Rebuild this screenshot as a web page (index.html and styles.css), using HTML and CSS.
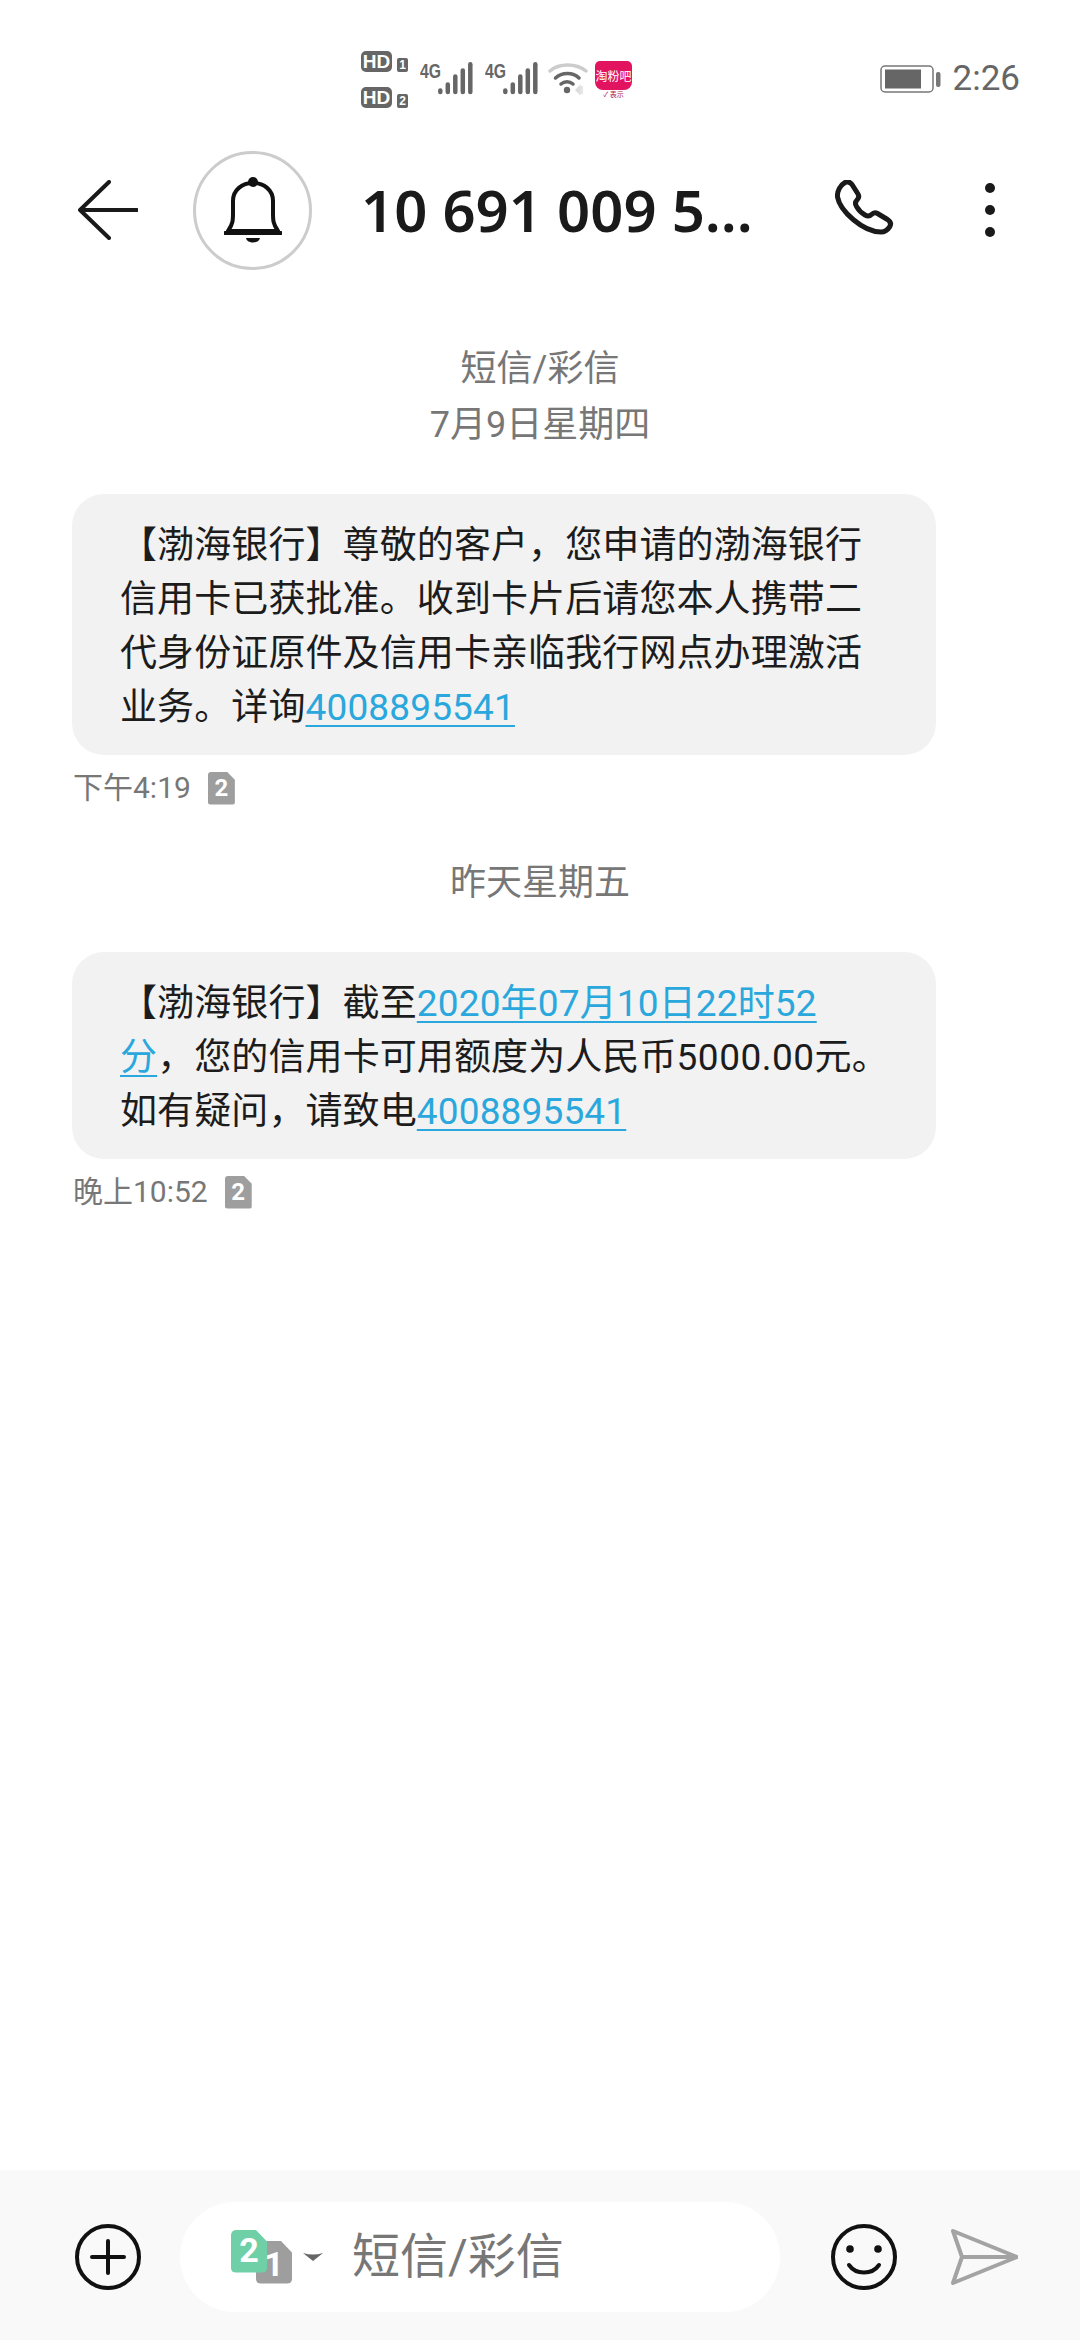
FILE: index.html
```html
<!DOCTYPE html>
<html lang="zh-CN">
<head>
<meta charset="utf-8">
<title>短信</title>
<link rel="stylesheet" href="styles.css">
</head>
<body>
<div class="phone">
  <div class="status">
    <div class="hd-col">
      <div class="hd-row"><span class="hd">HD</span><span class="sim-mini">1</span></div>
      <div class="hd-row"><span class="hd">HD</span><span class="sim-mini">2</span></div>
    </div>
    <div class="net"><span class="net-label">4G</span>
      <svg class="bars" viewBox="0 0 35 33"><g stroke="#666" stroke-width="4.500" stroke-linecap="round"><path d="M2.300 28.500v1.500"/><path d="M9.800 22.500v7.500"/><path d="M17.300 14.500v15.500"/><path d="M24.800 8.500v21.500"/><path d="M32.300 2.300v27.700"/></g></svg>
    </div>
    <div class="net"><span class="net-label">4G</span>
      <svg class="bars" viewBox="0 0 35 33"><g stroke="#666" stroke-width="4.500" stroke-linecap="round"><path d="M2.300 28.500v1.500"/><path d="M9.800 22.500v7.500"/><path d="M17.300 14.500v15.500"/><path d="M24.800 8.500v21.500"/><path d="M32.300 2.300v27.700"/></g></svg>
    </div>
    <svg class="wifi" viewBox="0 0 40 32"><g fill="none" stroke-width="3.500" stroke-linecap="round"><path d="M2 8C11 0 28 0 38 8" stroke="#ccc"/><path d="M7.500 15C14 9 25 9 31 15" stroke="#666"/><path d="M13 21C16.500 18 21.500 18 25 21" stroke="#666"/></g><circle cx="19" cy="27" r="3.200" fill="#666"/><path d="M28 27l4-4v8zM34 23v8" stroke="#ddd" stroke-width="1.500" fill="#ddd"/></svg>
    <div class="app">
      <div class="app-tile">淘粉吧</div>
      <div class="app-sub">✓ 表示</div>
    </div>
    <div class="status-right">
      <svg class="battery" viewBox="0 0 62 30"><rect x="1" y="2" width="52" height="26" rx="4" fill="none" stroke="#777" stroke-width="1.500"/><rect x="5" y="5.500" width="36" height="19" fill="#666"/><rect x="56" y="8" width="4.500" height="15" rx="2" fill="#777"/></svg>
      <span class="clock">2:26</span>
    </div>
  </div>

  <header class="head">
    <svg class="back" viewBox="0 0 60 60"><path d="M31 2L2 30l29 28M2 30h57" fill="none" stroke="#1a1a1a" stroke-width="4" stroke-linecap="round" stroke-linejoin="round"/></svg>
    <div class="avatar">
      <svg class="bell" viewBox="0 0 58 66"><path d="M4 54C9 47 9 43 9 36V24C9 13 18 6 29 6s20 7 20 18v12c0 7 0 11 5 18z" fill="none" stroke="#111" stroke-width="4" stroke-linejoin="round"/><path d="M1 56h56" stroke="#111" stroke-width="4" stroke-linecap="round"/><circle cx="29" cy="5" r="5" fill="#111"/><path d="M22 61h14c-1 6-13 6-14 0z" fill="#111"/></svg>
    </div>
    <h1 class="title">10 691 009 5...</h1>
    <svg class="call" viewBox="0 0 60 60"><path d="M10 2.500c3-1.500 5-.5 7 2l6 9.500c1.500 2.500 1 4-1 6-2 2-2 4-.5 6.500 2 3.500 5 6.500 8.500 8.500 2.500 1.500 4.500 1.500 6.500-.5 2-2 3.500-2.500 6-1l10 6c3 2 4 4.500 2 7.500-2 3-5 5-8.500 5C28 52 5 31 2.500 17c-.5-6 3-12 7.500-14.500z" fill="none" stroke="#1a1a1a" stroke-width="5" stroke-linejoin="round"/></svg>
    <div class="more"><i></i><i></i><i></i></div>
  </header>

  <main class="thread">
    <div class="date first">短信/彩信<br>7月9日星期四</div>
    <div class="bubble">【渤海银行】尊敬的客户，您申请的渤海银行<br>信用卡已获批准。收到卡片后请您本人携带二<br>代身份证原件及信用卡亲临我行网点办理激活<br>业务。详询<a class="link">4008895541</a></div>
    <div class="meta"><span>下午4:19</span><span class="sim-tag">2</span></div>
    <div class="date">昨天星期五</div>
    <div class="bubble">【渤海银行】截至<a class="link">2020年07月10日22时52<br>分</a>，您的信用卡可用额度为人民币<span class="num">5000.00</span>元。<br>如有疑问，请致电<a class="link">4008895541</a></div>
    <div class="meta"><span>晚上10:52</span><span class="sim-tag">2</span></div>
  </main>

  <footer class="composer">
    <svg class="ico" viewBox="0 0 66 66"><circle cx="33" cy="33" r="31" fill="none" stroke="#111" stroke-width="4"/><path d="M33 17v32M17 33h32" stroke="#111" stroke-width="4" stroke-linecap="round"/></svg>
    <div class="pill">
      <div class="sims">
        <span class="sim sim-back">1</span>
        <span class="sim sim-front">2</span>
      </div>
      <svg class="caret" viewBox="0 0 20 8"><path d="M0 0q10 3 20 0l-10 8z" fill="#666"/></svg>
      <span class="placeholder">短信/彩信</span>
    </div>
    <svg class="ico emoji" viewBox="0 0 66 66"><circle cx="33" cy="33" r="31" fill="none" stroke="#111" stroke-width="4"/><circle cx="19" cy="25" r="3.800" fill="#111"/><circle cx="47" cy="25" r="3.800" fill="#111"/><path d="M18 41c7 10 23 10 30 0" fill="none" stroke="#111" stroke-width="4" stroke-linecap="round"/></svg>
    <svg class="send" viewBox="0 0 68 56"><path d="M3 2l64 26L3 54l9-26zM12 28h55" fill="none" stroke="#a3a3a3" stroke-width="4" stroke-linejoin="round" stroke-linecap="round"/></svg>
  </footer>
</div>
</body>
</html>
```
FILE: styles.css
```css
* { box-sizing: border-box; }
html, body { margin: 0; padding: 0; }
body { background: #fff; font-family: Roboto, "Noto Sans CJK SC", sans-serif; }
.phone { width: 1080px; height: 2340px; display: flex; flex-direction: column; background: #fff; overflow: hidden; }

.status { height: 130px; display: flex; align-items: flex-start; padding: 51px 60px 0 361px; flex: none; }
.hd-col { display: flex; flex-direction: column; gap: 15px; width: 59px; flex: none; }
.hd-row { display: flex; align-items: flex-end; gap: 5px; height: 21px; }
.hd { width: 31px; height: 21px; background: #666; color: #fff; border-radius: 5px; font: 700 19px/21px "Liberation Sans", sans-serif; text-align: center; }
.sim-mini { width: 11px; height: 14px; background: #666; color: #fff; border-radius: 2px; font: 700 12px/14px "Liberation Sans", sans-serif; text-align: center; }
.net { position: relative; width: 53px; height: 44px; margin-top: 11px; margin-right: 12px; flex: none; }
.net-label { display: block; width: 18px; color: #666; font: 700 21px/18px "Liberation Sans", sans-serif; transform: scaleX(.75); transform-origin: left; }
.bars { position: absolute; right: 0; top: 0; width: 35px; height: 33px; }
.wifi { width: 40px; height: 32px; margin-top: 12px; margin-left: -2px; flex: none; }
.app { width: 37px; margin-left: 7px; margin-top: 10px; flex: none; }
.app-tile { height: 29px; background: #e2145f; border-radius: 5px 5px 8px 8px; color: #fff; font: 12px/29px "Noto Sans CJK SC", sans-serif; text-align: center; white-space: nowrap; }
.app-sub { color: #b01448; font: 7px/9px "Noto Sans CJK SC", sans-serif; text-align: center; white-space: nowrap; }
.status-right { margin-left: auto; display: flex; align-items: center; gap: 11px; margin-top: 8px; }
.battery { width: 62px; height: 30px; }
.clock { color: #666; font-size: 35px; line-height: 40px; }

.head { height: 160px; flex: none; display: flex; align-items: center; padding: 0 0 0 78px; }
.back { width: 60px; height: 60px; flex: none; }
.avatar { width: 119px; height: 119px; margin-left: 55px; border: 3px solid #ccc; border-radius: 50%; display: flex; align-items: center; justify-content: center; flex: none; }
.bell { width: 58px; height: 66px; }
.title { margin: 0 0 0 49px; width: 422px; font: 600 58px/70px "Noto Sans", sans-serif; color: #1a1a1a; white-space: nowrap; flex: none; }
.call { width: 60px; height: 60px; margin-left: 52px; flex: none; }
.more { margin-left: 90px; display: flex; flex-direction: column; gap: 12px; flex: none; }
.more i { display: block; width: 10px; height: 10px; background: #1a1a1a; border-radius: 50%; }

.thread { flex: 1; padding: 0 72px; min-height: 0; }
.date { color: #777; font-size: 36px; line-height: 56px; text-align: center; margin-top: 47px; margin-left: -72px; margin-right: -72px; }
.date.first { margin-top: 51px; }
.bubble { width: 864px; margin-top: 41px; padding: 25px 48px 20px; background: #f2f2f2; border-radius: 32px; color: #1c1c1c; font-size: 37px; letter-spacing: .1px; line-height: 54px; white-space: nowrap; }
.link { color: #2aa7dc; text-decoration: underline; text-decoration-thickness: 2px; text-underline-offset: 5px; letter-spacing: .15px; }
.num { letter-spacing: .5px; }
.meta { display: flex; align-items: center; height: 40px; margin-top: 13px; color: #777; font-size: 30px; line-height: 40px; gap: 17px; padding-left: 1px; }
.sim-tag { width: 27px; height: 33px; background: #9e9e9e; color: #fff; font: 700 24px/33px Roboto, sans-serif; text-align: center; border-radius: 3px; clip-path: polygon(0 0, 70% 0, 100% 25%, 100% 100%, 0 100%); }

.composer { height: 170px; flex: none; display: flex; align-items: center; background: #f9f9f9; padding: 3px 0 0 75px; }
.ico { width: 66px; height: 66px; flex: none; }
.pill { width: 600px; height: 110px; margin-left: 39px; background: #fff; border-radius: 55px; display: flex; align-items: center; padding-left: 51px; flex: none; }
.sims { position: relative; width: 60px; height: 54px; flex: none; }
.sim { position: absolute; width: 36px; height: 43px; color: #fff; font: 700 34px/43px Roboto, sans-serif; text-align: center; border-radius: 5px; clip-path: polygon(0 0, 68% 0, 100% 28%, 100% 100%, 0 100%); }
.sim-back { left: 25px; top: 11px; background: #9e9e9e; line-height: 46px; }
.sim-front { left: 0; top: 0; background: #6fcfa6; line-height: 40px; }
.caret { width: 20px; height: 8px; margin-left: 12px; flex: none; }
.placeholder { margin-left: 29px; color: #777; font-size: 48px; line-height: 60px; white-space: nowrap; }
.emoji { margin-left: 51px; }
.send { width: 68px; height: 56px; margin-left: 53px; flex: none; }
```
